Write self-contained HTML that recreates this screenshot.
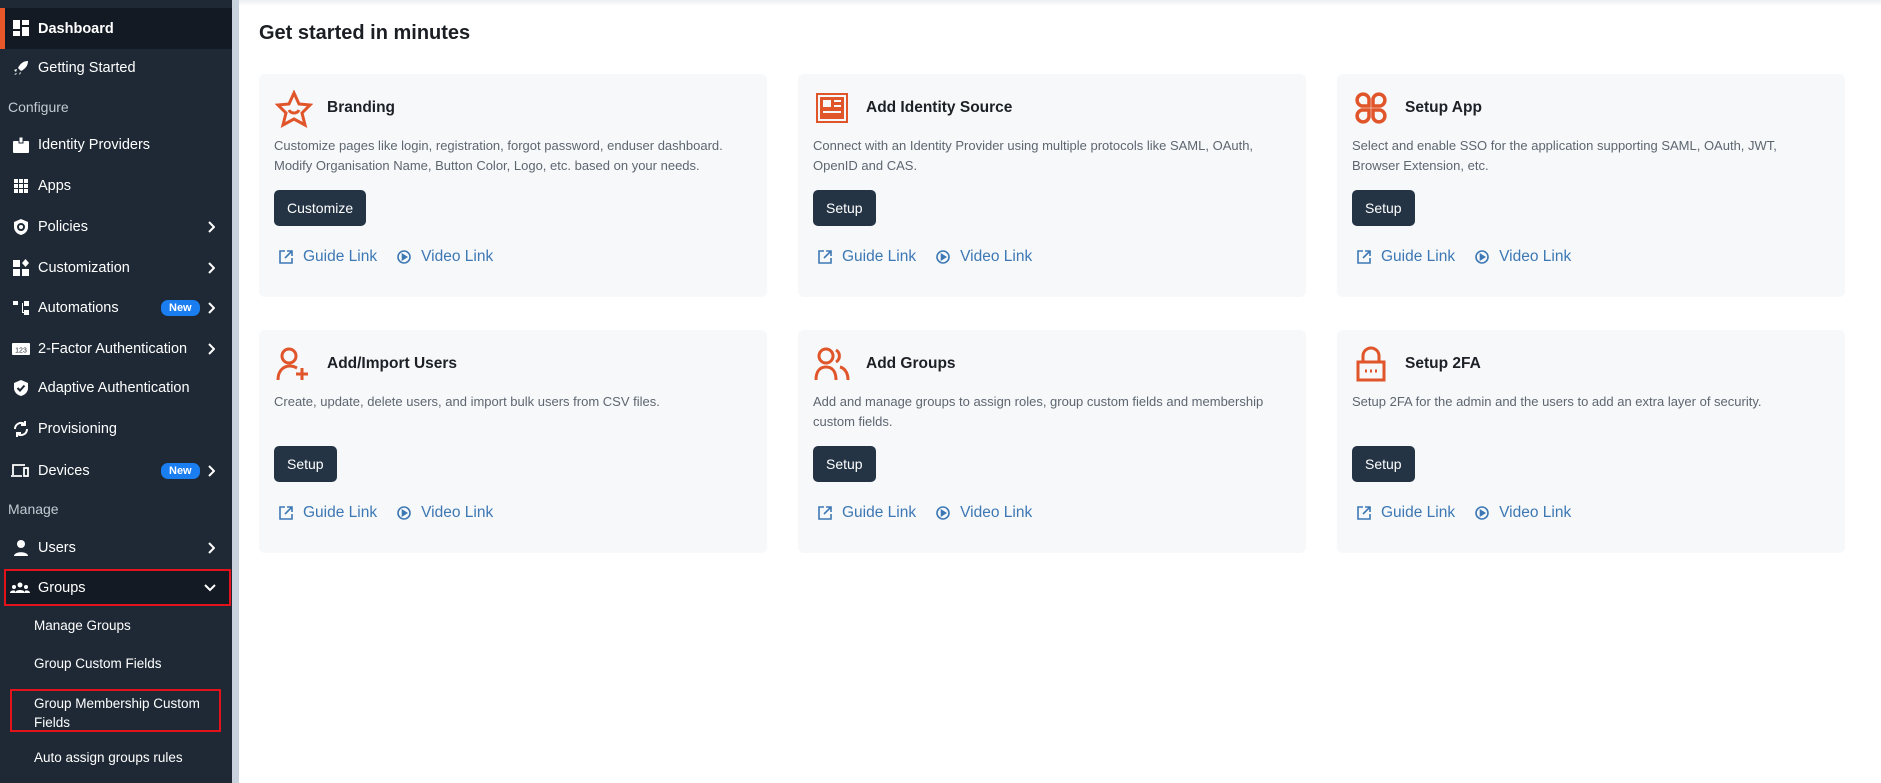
<!DOCTYPE html>
<html><head><meta charset="utf-8"><style>
*{box-sizing:border-box;margin:0;padding:0}
body{width:1881px;height:783px;overflow:hidden;background:#fff;font-family:"Liberation Sans",sans-serif;position:relative}
#sb{position:absolute;left:0;top:0;width:232px;height:783px;background:#1e2935}
#sbb{position:absolute;left:232px;top:0;width:7px;height:783px;background:#c9d3dd}
.it{position:absolute;left:0;width:232px;height:40px;color:#fff;font-size:14.5px;display:flex;align-items:center}
.it .ic{position:absolute;left:12px;width:18px;height:18px;top:11px}
.it .tx{position:absolute;left:38px}
.it .ch{position:absolute;left:207px;top:14px;width:8px;height:12px}
.sec{position:absolute;left:8px;color:#c3cad2;font-size:14px}
.sub{position:absolute;left:34px;color:#fff;font-size:13.5px}
.new{position:absolute;left:161px;top:12px;background:#1a7df0;color:#fff;font-size:11px;font-weight:bold;border-radius:7px;padding:2px 8px}
h1{position:absolute;left:259px;top:22px;font-size:20px;font-weight:bold;color:#1b1f24}
.card{position:absolute;width:508px;height:223px;background:#f6f8fa;border-radius:6px}
.card .ci{position:absolute;left:16px;top:16px}
.card .t{position:absolute;left:68px;top:25px;font-size:15.5px;font-weight:bold;color:#1d2126}
.card .d{position:absolute;left:15px;top:62px;width:455px;font-size:13px;line-height:20px;color:#5e6670}
.card .b{position:absolute;left:15px;background:#243445;color:#fff;font-size:14px;border-radius:5px;height:36px;line-height:36px;padding:0 13px}
.card .l{position:absolute;left:20px;font-size:15.5px;color:#3d78b4;display:flex;align-items:center}
.card .l svg{margin-right:10px}
</style></head><body>
<div id="sb">
<div class="it" style="top:8px;height:41px;background:#131a23"><div style="position:absolute;left:0;top:0;width:5px;height:41px;background:#e8572a"></div>
<svg class="ic" viewBox="0 0 18 18" fill="#fff"><rect x="1" y="1" width="7" height="9"/><rect x="10" y="1" width="7" height="5"/><rect x="1" y="12" width="7" height="5"/><rect x="10" y="8" width="7" height="9"/></svg><span class="tx" style="font-weight:bold">Dashboard</span></div>
<div class="it" style="top:48px"><svg class="ic" viewBox="0 0 18 18" fill="#fff"><path d="M16 2c-5 0-8 3-10 7l3 3c4-2 7-5 7-10zM5 10l-3 1 2 2zM8 13l-1 3 2-2zM4 14l-2 2 3-1z"/></svg><span class="tx">Getting Started</span></div>
<div class="sec" style="top:99px">Configure</div>
<div class="it" style="top:125px"><svg class="ic" viewBox="0 0 18 18" fill="#fff"><rect x="1" y="5" width="16" height="12" rx="1"/><rect x="7" y="1" width="4" height="6" fill="#fff" stroke="#1e2935"/></svg><span class="tx">Identity Providers</span></div>
<div class="it" style="top:166px"><svg class="ic" viewBox="0 0 18 18" fill="#fff"><g><rect x="2" y="2" width="4" height="4"/><rect x="7" y="2" width="4" height="4"/><rect x="12" y="2" width="4" height="4"/><rect x="2" y="7" width="4" height="4"/><rect x="7" y="7" width="4" height="4"/><rect x="12" y="7" width="4" height="4"/><rect x="2" y="12" width="4" height="4"/><rect x="7" y="12" width="4" height="4"/><rect x="12" y="12" width="4" height="4"/></g></svg><span class="tx">Apps</span></div>
<div class="it" style="top:207px"><svg class="ic" viewBox="0 0 18 18"><path d="M9 1l7 3v5c0 4-3 7-7 8-4-1-7-4-7-8V4z" fill="#fff"/><circle cx="9" cy="9" r="3" fill="none" stroke="#1e2935" stroke-width="2"/></svg><span class="tx">Policies</span><svg class="ch" viewBox="0 0 8 12" fill="none" stroke="#fff" stroke-width="2"><path d="M2 1l5 5-5 5"/></svg></div>
<div class="it" style="top:248px"><svg class="ic" viewBox="0 0 18 18" fill="#fff"><rect x="1" y="1" width="7" height="7"/><rect x="1" y="10" width="7" height="7"/><rect x="10" y="10" width="7" height="7"/><path d="M13.5 0l3.5 4-3.5 4-3.5-4z"/></svg><span class="tx">Customization</span><svg class="ch" viewBox="0 0 8 12" fill="none" stroke="#fff" stroke-width="2"><path d="M2 1l5 5-5 5"/></svg></div>
<div class="it" style="top:288px"><svg class="ic" viewBox="0 0 18 18" fill="#fff"><rect x="1" y="2" width="5" height="4"/><rect x="12" y="2" width="5" height="5"/><rect x="12" y="11" width="5" height="5"/><path d="M6 4h4v10h2v-1H11V4z"/></svg><span class="tx">Automations</span><span class="new">New</span><svg class="ch" viewBox="0 0 8 12" fill="none" stroke="#fff" stroke-width="2"><path d="M2 1l5 5-5 5"/></svg></div>
<div class="it" style="top:329px"><svg class="ic" viewBox="0 0 18 18"><rect x="0" y="3" width="18" height="12" rx="1" fill="#fff"/><text x="9" y="12.5" font-size="7" text-anchor="middle" fill="#1e2935" font-family="Liberation Sans">123</text></svg><span class="tx">2-Factor Authentication</span><svg class="ch" viewBox="0 0 8 12" fill="none" stroke="#fff" stroke-width="2"><path d="M2 1l5 5-5 5"/></svg></div>
<div class="it" style="top:368px"><svg class="ic" viewBox="0 0 18 18"><path d="M9 1l7 3v5c0 4-3 7-7 8-4-1-7-4-7-8V4z" fill="#fff"/><path d="M5.5 9l2.5 2.5 4.5-5" stroke="#1e2935" stroke-width="2" fill="none"/></svg><span class="tx">Adaptive Authentication</span></div>
<div class="it" style="top:409px"><svg class="ic" viewBox="0 0 18 18" fill="none" stroke="#fff" stroke-width="2"><path d="M3 9a6 6 0 0 1 10-4.5M15 9a6 6 0 0 1-10 4.5"/><path d="M13 1v4h-4M5 17v-4h4"/></svg><span class="tx">Provisioning</span></div>
<div class="it" style="top:451px"><svg class="ic" viewBox="0 0 20 18" fill="none" stroke="#fff" stroke-width="1.8" style="width:20px;left:10px"><path d="M3 13V3h12M1 14h11"/><rect x="14" y="6" width="4" height="8"/></svg><span class="tx">Devices</span><span class="new">New</span><svg class="ch" viewBox="0 0 8 12" fill="none" stroke="#fff" stroke-width="2"><path d="M2 1l5 5-5 5"/></svg></div>
<div class="sec" style="top:501px">Manage</div>
<div class="it" style="top:528px"><svg class="ic" viewBox="0 0 18 18" fill="#fff"><circle cx="9" cy="5" r="4"/><path d="M2 17c0-5 14-5 14 0z"/></svg><span class="tx">Users</span><svg class="ch" viewBox="0 0 8 12" fill="none" stroke="#fff" stroke-width="2"><path d="M2 1l5 5-5 5"/></svg></div>
<div class="it" style="top:569px;height:37px;background:#131a23;outline:2px solid #e3131b;outline-offset:-2px;left:4px;width:227px"><svg class="ic" viewBox="0 0 20 18" fill="#fff" style="left:6px;width:20px;top:10px"><circle cx="10" cy="6" r="2.5"/><circle cx="4" cy="8" r="2"/><circle cx="16" cy="8" r="2"/><path d="M5 14c0-4 10-4 10 0zM0 14c0-3 5-3 5-2v2zM15 12c0-1 5-1 5 2h-5z"/></svg><span class="tx" style="left:34px">Groups</span><svg style="position:absolute;left:200px;top:15px" width="12" height="8" viewBox="0 0 12 8" fill="none" stroke="#fff" stroke-width="2"><path d="M1 1l5 5 5-5"/></svg></div>
<div class="sub" style="top:618px">Manage Groups</div>
<div class="sub" style="top:656px">Group Custom Fields</div>
<div style="position:absolute;left:10px;top:689px;width:211px;height:43px;border:2px solid #e3131b"></div>
<div class="sub" style="top:694px;line-height:19px">Group Membership Custom<br>Fields</div>
<div class="sub" style="top:750px">Auto assign groups rules</div>
</div>
<div id="sbb"></div>
<div style="position:absolute;left:239px;top:0;width:1642px;height:6px;background:linear-gradient(#eceef1,#fff)"></div>
<h1>Get started in minutes</h1>

<div class="card" style="left:259px;top:74px">
<svg class="ci" width="38" height="38" viewBox="0 0 38 38" fill="none" stroke="#e0552a" stroke-width="3"><path d="M19 3l5 11 11 1-8 8 3 12-11-6-11 6 3-12-8-8 11-1z"/><path d="M14 20c2 4 8 4 10 0"/></svg>
<div class="t">Branding</div>
<div class="d">Customize pages like login, registration, forgot password, enduser dashboard. Modify Organisation Name, Button Color, Logo, etc. based on your needs.</div>
<div class="b" style="top:116px">Customize</div>
<div class="l" style="top:174px"><svg width="14" height="14" viewBox="0 0 14 14" fill="none" stroke="#3d78b4" stroke-width="1.6"><path d="M6 1H1v12h12V8M8 1h5v5M13 1L6 8"/></svg>Guide Link<span style="width:20px"></span><svg width="14" height="14" viewBox="0 0 14 14" fill="none" stroke="#3d78b4" stroke-width="1.6"><circle cx="7" cy="7" r="6"/><path d="M5.5 4.5v5l4-2.5z" fill="#3d78b4"/></svg>Video Link</div>
</div>

<div class="card" style="left:798px;top:74px">
<svg class="ci" width="36" height="36" viewBox="0 0 36 36"><rect x="2" y="3" width="32" height="30" fill="#e0552a"/><rect x="5" y="6" width="26" height="24" fill="none" stroke="#f6f8fa" stroke-width="2"/><rect x="9" y="10" width="8" height="7" fill="#f6f8fa"/><path d="M20 11h7M20 16h7M9 22h18" stroke="#f6f8fa" stroke-width="2"/></svg>
<div class="t">Add Identity Source</div>
<div class="d">Connect with an Identity Provider using multiple protocols like SAML, OAuth, OpenID and CAS.</div>
<div class="b" style="top:116px">Setup</div>
<div class="l" style="top:174px"><svg width="14" height="14" viewBox="0 0 14 14" fill="none" stroke="#3d78b4" stroke-width="1.6"><path d="M6 1H1v12h12V8M8 1h5v5M13 1L6 8"/></svg>Guide Link<span style="width:20px"></span><svg width="14" height="14" viewBox="0 0 14 14" fill="none" stroke="#3d78b4" stroke-width="1.6"><circle cx="7" cy="7" r="6"/><path d="M5.5 4.5v5l4-2.5z" fill="#3d78b4"/></svg>Video Link</div>
</div>

<div class="card" style="left:1337px;top:74px">
<svg class="ci" width="36" height="36" viewBox="0 0 36 36" fill="none" stroke="#e0552a" stroke-width="3.5"><path d="M16 16H9a6 6 0 1 1 7-7zM20 16h7a6 6 0 1 0-7-7zM16 20H9a6 6 0 1 0 7 7zM20 20h7a6 6 0 1 1-7 7z"/></svg>
<div class="t">Setup App</div>
<div class="d">Select and enable SSO for the application supporting SAML, OAuth, JWT, Browser Extension, etc.</div>
<div class="b" style="top:116px">Setup</div>
<div class="l" style="top:174px"><svg width="14" height="14" viewBox="0 0 14 14" fill="none" stroke="#3d78b4" stroke-width="1.6"><path d="M6 1H1v12h12V8M8 1h5v5M13 1L6 8"/></svg>Guide Link<span style="width:20px"></span><svg width="14" height="14" viewBox="0 0 14 14" fill="none" stroke="#3d78b4" stroke-width="1.6"><circle cx="7" cy="7" r="6"/><path d="M5.5 4.5v5l4-2.5z" fill="#3d78b4"/></svg>Video Link</div>
</div>

<div class="card" style="left:259px;top:330px">
<svg class="ci" width="36" height="36" viewBox="0 0 36 36" fill="none" stroke="#e0552a" stroke-width="3"><circle cx="14" cy="10" r="7"/><path d="M3 34c0-10 6-14 12-14 3 0 5 1 7 2M27 22v12M21 28h12"/></svg>
<div class="t">Add/Import Users</div>
<div class="d">Create, update, delete users, and import bulk users from CSV files.</div>
<div class="b" style="top:116px">Setup</div>
<div class="l" style="top:174px"><svg width="14" height="14" viewBox="0 0 14 14" fill="none" stroke="#3d78b4" stroke-width="1.6"><path d="M6 1H1v12h12V8M8 1h5v5M13 1L6 8"/></svg>Guide Link<span style="width:20px"></span><svg width="14" height="14" viewBox="0 0 14 14" fill="none" stroke="#3d78b4" stroke-width="1.6"><circle cx="7" cy="7" r="6"/><path d="M5.5 4.5v5l4-2.5z" fill="#3d78b4"/></svg>Video Link</div>
</div>

<div class="card" style="left:798px;top:330px">
<svg class="ci" width="36" height="36" viewBox="0 0 36 36" fill="none" stroke="#e0552a" stroke-width="3"><circle cx="12" cy="10" r="7"/><path d="M2 34c0-10 5-13 10-13s10 3 10 13M22 4a7 7 0 0 1 0 12M26 21c4 1 8 5 8 13"/></svg>
<div class="t">Add Groups</div>
<div class="d">Add and manage groups to assign roles, group custom fields and membership custom fields.</div>
<div class="b" style="top:116px">Setup</div>
<div class="l" style="top:174px"><svg width="14" height="14" viewBox="0 0 14 14" fill="none" stroke="#3d78b4" stroke-width="1.6"><path d="M6 1H1v12h12V8M8 1h5v5M13 1L6 8"/></svg>Guide Link<span style="width:20px"></span><svg width="14" height="14" viewBox="0 0 14 14" fill="none" stroke="#3d78b4" stroke-width="1.6"><circle cx="7" cy="7" r="6"/><path d="M5.5 4.5v5l4-2.5z" fill="#3d78b4"/></svg>Video Link</div>
</div>

<div class="card" style="left:1337px;top:330px">
<svg class="ci" width="36" height="36" viewBox="0 0 36 36" fill="none" stroke="#e0552a" stroke-width="3"><path d="M10 16V10a8 8 0 0 1 16 0v6"/><rect x="5" y="16" width="26" height="18"/><path d="M12 25h2M17 25h2M22 25h2"/></svg>
<div class="t">Setup 2FA</div>
<div class="d">Setup 2FA for the admin and the users to add an extra layer of security.</div>
<div class="b" style="top:116px">Setup</div>
<div class="l" style="top:174px"><svg width="14" height="14" viewBox="0 0 14 14" fill="none" stroke="#3d78b4" stroke-width="1.6"><path d="M6 1H1v12h12V8M8 1h5v5M13 1L6 8"/></svg>Guide Link<span style="width:20px"></span><svg width="14" height="14" viewBox="0 0 14 14" fill="none" stroke="#3d78b4" stroke-width="1.6"><circle cx="7" cy="7" r="6"/><path d="M5.5 4.5v5l4-2.5z" fill="#3d78b4"/></svg>Video Link</div>
</div>
</body></html>
